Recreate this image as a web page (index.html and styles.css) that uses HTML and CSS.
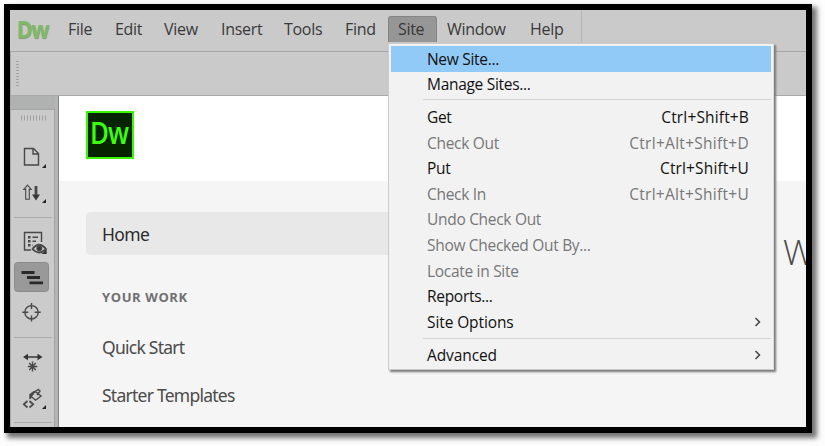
FILE: index.html
```html
<!DOCTYPE html>
<html lang="en">
<head>
<meta charset="utf-8">
<title>Dreamweaver</title>
<link rel="stylesheet" href="styles.css">
</head>
<body>
<div class="window">
  <header class="menubar">
    <span class="brand">Dw</span>
    <nav class="menus">
      <span>File</span><span>Edit</span><span>View</span><span>Insert</span><span>Tools</span><span>Find</span><span class="active">Site</span><span>Window</span><span>Help</span>
    </nav>
  </header>
  <div class="toolbar"><i class="grip"></i></div>
  <div class="body">
    <aside class="rail">
      <div class="rail-head"></div>
      <div class="rail-tools">
        <svg width="45" height="317" viewBox="11 110 45 317" fill="none" stroke="#484848" stroke-width="1.4">
          <path d="M21 118H47" stroke="#a2a2a2" stroke-width="5" stroke-dasharray="1 2"/>
          <path d="M14 217.5H52M14 337.5H52M14 422.5H52" stroke="#adadad" stroke-width="1"/>
          <path d="M24.5 148.5H33.5L38.5 153.5V165H24.5ZM33 149V154H38"/>
          <path d="M46 164V168H42ZM46 199V203H42ZM46 405V409H42Z" fill="#222" stroke="none"/>
          <path d="M27.5 185.2L31.2 189.4H29.3V199.3H25.7V189.4H23.8Z" stroke-width="1.1"/>
          <path d="M36 186V196" stroke-width="2.8"/><path d="M32 194.5H40L36 200.5Z" fill="#383838" stroke="none"/>
          <path d="M31 250H24.5V232.5H41.5V242"/>
          <path d="M28 237.3H30.5M28 241.3H30.5M28 245.3H30.5" stroke-width="2.5"/><path d="M32.5 237.3H38M32.5 241.3H36M32.5 245.3H33"/>
          <path d="M32.5 249Q39 240.5 46 249Q39 256 32.5 249Z" fill="#ccc" stroke-width="1.8"/><circle cx="39.3" cy="248.3" r="2.3" fill="#333"/>
          <path d="M46.7 249.5V254H41.5Z" fill="#333" stroke="none"/>
          <rect x="14.5" y="262.5" width="34" height="29" rx="3" fill="#999" stroke="#8b8b8b" stroke-width="1"/>
          <path d="M21.5 272.5H34.5M27 277.5H40M29.5 282.8H43" stroke="#292929" stroke-width="2.8"/>
          <circle cx="31.5" cy="312.3" r="6.7"/><path d="M31.5 303V309M31.5 315.5V321.5M22.3 312.3H28.3M34.7 312.3H40.7"/>
          <path d="M26 357H39" stroke-width="1.7"/><path d="M23 357L28 353.7V360.3ZM42.5 357L37.5 353.7V360.3Z" fill="#333" stroke="none"/>
          <path d="M32.5 361.5V371.5M27.8 366.5H37.3M29.2 363L35.8 370M35.8 363L29.2 370"/>
          <path d="M27.5 401L23.8 404.3L27.5 407.5M29.5 401L33.2 404.3L29.5 407.5" stroke-width="1.7"/>
          <path d="M30.5 397L35 391.5L41 396L35.7 400.2L31 396.5M32 394L38.3 389.5L40 391L37 395"/><path d="M30 399V394.5L34 391.5Z" fill="#484848"/>
        </svg>
      </div>
    </aside>
    <main class="content">
      <div class="banner"><span class="logo"><b>Dw</b></span></div>
      <div class="start">
        <nav class="side">
          <div class="home">Home</div>
          <div class="heading">YOUR WORK</div>
          <div class="link">Quick Start</div>
          <div class="link">Starter Templates</div>
        </nav>
        <div class="welcome">W</div>
      </div>
    </main>
  </div>
</div>
<div class="dropdown">
  <div class="item selected"><span>New Site...</span></div>
  <div class="item"><span>Manage Sites...</span></div>
  <hr class="first">
  <div class="item"><span>Get</span><span class="key">Ctrl+Shift+B</span></div>
  <div class="item off"><span>Check Out</span><span class="key long">Ctrl+Alt+Shift+D</span></div>
  <div class="item"><span>Put</span><span class="key">Ctrl+Shift+U</span></div>
  <div class="item off"><span>Check In</span><span class="key long">Ctrl+Alt+Shift+U</span></div>
  <div class="item off"><span>Undo Check Out</span></div>
  <div class="item off"><span>Show Checked Out By...</span></div>
  <div class="item off"><span>Locate in Site</span></div>
  <div class="item"><span>Reports...</span></div>
  <div class="item"><span class="loose">Site Options</span><svg class="arrow" width="8" height="10" viewBox="0 0 8 10"><path d="M1.5 1L5.5 5L1.5 9"/></svg></div>
  <hr class="second">
  <div class="item"><span class="loose">Advanced</span><svg class="arrow" width="8" height="10" viewBox="0 0 8 10"><path d="M1.5 1L5.5 5L1.5 9"/></svg></div>
</div>
</body>
</html>
```
FILE: styles.css
```css
* { box-sizing: border-box; }
body { margin: 0; width: 825px; height: 446px; padding: 4px; overflow: hidden; background: #fdfdfd; font-family: "Open Sans", "Noto Sans", sans-serif; }
.window { width: 808px; height: 429px; border: 6px solid #000; background: #f5f5f5; box-shadow: 4px 4px 5px 1px rgba(0,0,0,.55); overflow: hidden; display: flex; flex-direction: column; }
.menubar { height: 42px; flex: none; background: #cacaca; border-bottom: 1px solid #a5a5a5; display: flex; }
.brand { width: 48px; padding-left: 7px; font: bold 23px/38px "Open Sans", sans-serif; letter-spacing: -1.2px; color: #80b967; text-shadow: 0 1px 1px #819775; transform: scaleX(.92); transform-origin: 7px 0; }
.menus { display: grid; grid-template-columns: 47px 49px 57px 63px 61px 43px 59px 83px 61px; height: 32px; padding-top: 6px; font-size: 16px; line-height: 26px; color: #393939; letter-spacing: -.3px; border-right: 1px solid #b4b4b4; }
.menus span { padding-left: 10px; white-space: nowrap; }
.menus .active { width: 49px; margin-left: 10px; background: #969696; border: 1px solid #858585; border-bottom: 0; border-radius: 3px 3px 0 0; padding-left: 9px; line-height: 24px; }
.toolbar { height: 44px; flex: none; background: #cacaca; border-bottom: 1px solid #aaa; border-left: 1px solid #aaa; padding: 9px 0 0 5px; }
.grip { display: block; width: 3px; height: 27px; background: repeating-linear-gradient(#a3a3a3 0 1px, transparent 1px 3px); }
.body { flex: 1; display: flex; min-height: 0; }
.rail { width: 49px; flex: none; background: #cbcbcb; border-left: 1px solid #aaa; border-right: 4px solid #b5b5b5; box-shadow: inset -1px 0 #a3a3a3; position: relative; }
.rail::after { content: ""; position: absolute; right: -4px; top: 0; width: 1px; height: 331px; background: #858585; }
.rail-head { height: 14px; background: #b0b2b1; border-bottom: 1px solid #a5a5a5; }
.rail-tools svg { display: block; }
.content { flex: 1; min-width: 0; }
.banner { height: 85px; background: #fff; padding: 15px 0 0 27px; }
.logo { display: block; width: 48px; height: 48px; border: 2px solid #38f900; background: #072401; color: #3dff0b; font: 30px/40px "Open Sans", sans-serif; letter-spacing: -1px; padding-left: 2px; }
.logo b { display: block; font-weight: 600; transform: scaleX(.86); transform-origin: 0 0; }
.start { display: flex; padding: 31px 0 0 27px; }
.side { width: 697px; flex: none; color: #4b4b4b; font-size: 17.5px; }
.side div { padding-left: 16px; }
.home { width: 320px; height: 43px; line-height: 45px; border-radius: 5px; background: #e8e8e8; color: #2c2c2c; letter-spacing: -.6px; }
.heading { height: 83px; line-height: 84px; font-size: 13px; font-weight: 700; color: #707070; letter-spacing: .6px; }
.link { height: 48px; line-height: 18px; letter-spacing: -.75px; }
.link, .home { font-family: "Noto Sans", sans-serif; }
.welcome { font-size: 35px; font-weight: 300; line-height: 80px; color: #4b4b4b; }
.dropdown { position: absolute; left: 388px; top: 43px; width: 386px; height: 327px; background: #f2f2f2; border: 1px solid #ccc; border-right-color: #ddd; padding: 2px; box-shadow: 2px 2px 2px #777; color: #111; font-size: 15.5px; letter-spacing: -.3px; }
.item { height: 25.6px; line-height: 26px; padding: 0 22px 0 36px; display: flex; justify-content: space-between; align-items: center; white-space: nowrap; }
.selected { background: #91c9f7; }
.off { color: #777; }
.key { letter-spacing: .15px; }
.long { letter-spacing: .28px; }
.loose { letter-spacing: -.1px; }
hr { border: 0; height: 1px; background: #d4d4d4; margin: 3px 0 4px 32px; }
.first { margin-top: 2px; }
.arrow { fill: none; stroke: #444; stroke-width: 1.5; margin-right: -13px; }
```
